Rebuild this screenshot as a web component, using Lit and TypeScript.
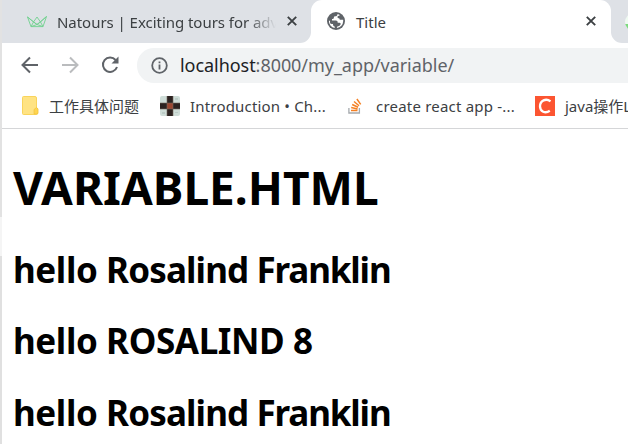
import { LitElement, html, css, svg } from "lit";
import { customElement } from "lit/decorators.js";

const closeIcon = html`<svg class="close" width="10" height="10" viewBox="0 0 10 10"><path d="M.8.8 9.2 9.2M9.2.8.8 9.2" stroke="#3c4043" stroke-width="1.900" fill="none"/></svg>`;

const crown = html`<svg class="crown" width="20" height="12" viewBox="0 0 20 12" fill="none" stroke-width=".9" stroke-linejoin="round">
  <path stroke="#72d190" d="M.5 1 4 10.600H16L19.500.5 13.500 6 10 1 6.500 6ZM.5 1 10 8.500 19.500.5M4 10.600 6.500 6 10 8.500 13.500 6 16 10.600M4 10.600 10 8.500 16 10.600"/></svg>`;

const globe = html`<svg class="globe" width="18" height="18" viewBox="0 0 18 18"><circle cx="9" cy="9" r="9" fill="#5f6368"/>
  <path fill="#fff" d="M10.500 1.900C10.600 3.600 9.600 4.200 8 4.300 7 4.400 6.900 5 6.900 5.800 6.900 6.800 6 7 5 7V8.600H8.800C10.200 8.600 10.700 9.400 10.700 10.700H12.500C13.600 10.700 13.800 11.600 13.500 12.500 13 13.800 11.500 14.400 10.300 14.500L9.800 16.100A7.200 7.200 0 0 0 16.200 9C16.200 8.600 16.200 8.200 16.100 7.800H13.600C12.600 7.800 12.300 7.200 12.300 6.300 11 6.300 10.400 5.700 10.500 4.700 10.600 3.900 11.500 3.700 12.500 3.700V2.800ZM1.900 8.800A7.200 7.200 0 0 0 7.700 16.100V14.500C6.600 14.400 6 13.700 6 12.600V11.900H4.600C3.500 11.900 3 11.200 3 10.300V8.800Z"/></svg>`;

const stack = html`<svg class="stack" width="14" height="16" viewBox="0 0 14 16" fill="none">
  <path stroke="#a5a9ad" stroke-width="1.300" d="M.9 10v5h10.500v-5"/>
  <path stroke="#f48024" stroke-width="1.500" d="M3 12.500h6.500M3.200 9.600l6.400 1.300M4.200 6.500l5.900 2.800M6 3.500l5 4.200M8.900 1l3.800 5.400"/></svg>`;

const mosaic = html`<svg class="mosaic" width="20" height="20" viewBox="0 0 20 20">
  <rect width="20" height="20" rx="2" fill="#cfddd8"/>
  ${svg`<path fill="#2c2220" d="M7 0h6v7H7zM0 7h7v6H0zM13 7h7v6h-7zM7 13h6v7H7z"/>
  <path fill="#9c4630" d="M7 7h6v6H7z"/>
  <path fill="#bccbc6" d="M2 16h3v2H2zM15 2h3v2h-3zM15 16h3v1h-3z"/>
  <path stroke="#756960" stroke-width=".6" d="M7 0v20M13 0v20M0 7h20M0 13h20"/>`}</svg>`;

@customElement("app-root")
class AppRoot extends LitElement {
  static styles = css`
    :host { display: flex; width: 628px; height: 444px; overflow: hidden; background: #fff;
      font-family: "Noto Sans", "Noto Sans CJK SC", sans-serif; color: #3c4043; white-space: nowrap; }
    * { box-sizing: border-box; }
    svg { display: block; flex: none; }
    .edge { flex: none; width: 2px; background: linear-gradient(#e2e2e2 217px, #f5f5f5 217px 256px, #e0e0e0 256px); }
    .window { width: 626px; flex: none; overflow: hidden; }
    .tab { height: 43px; display: flex; font-size: 15px; line-height: 43px; flex: none; }
    .tab.back { width: 309px; background: #dee1e6; border-bottom-right-radius: 11px; padding-left: 25px; }
    .tab.front { width: 300px; background: #fff; border-radius: 11px 11px 0 0; padding-left: 16px; }
    .strip { display: flex; width: 626px; height: 43px; background: linear-gradient(#dee1e6 20px, #fff 20px); }
    .tab.next { width: 17px; background: #dee1e6; border-bottom-left-radius: 11px; padding: 13px 0 0 14px; overflow: hidden; }
    .dot { width: 18px; height: 18px; border-radius: 9px; background: linear-gradient(#effaf1 11px, #7bdc7d 11px); flex: none; }
    .crown { margin-top: 16px; }
    .globe { margin-top: 12px; }
    .close { margin-top: 16px; }
    .label { height: 43px; padding-top: 1px; }
    .natours { margin-left: 10px; width: 220px; letter-spacing: -.04px;
      -webkit-mask-image: linear-gradient(90deg, #000 190px, transparent 219px); }
    .back .close { margin-left: 10px; }
    .title { margin-left: 11px; width: 219px; }
    .front .close { margin-left: 11px; }
    .toolbar { height: 45px; padding-top: 5px; display: flex; }
    .nav { margin-top: 7px; }
    .b { margin-left: 18px; } .f { margin-left: 20px; } .r { margin-left: 20px; }
    .pill { margin-left: 17px; width: 520px; height: 35px; flex: none; background: #f1f3f4;
      border-radius: 17px 0 0 17px; display: flex; padding-left: 14px; }
    .info { margin-top: 9px; }
    .url { margin-left: 12px; font-size: 18px; line-height: 35px; color: #5f6368; letter-spacing: -.05px; }
    .host { color: #202124; }
    .bookmarks { height: 41px; border-bottom: 1px solid #d5d6d8; display: flex; font-size: 15px; line-height: 36px; padding-left: 20px; }
    .bookmarks svg { margin-top: 8px; }
    .bookmarks .stack { margin-top: 10px; }
    .mark { display: flex; flex: none; }
    .m1 { width: 138px; } .m2 { width: 188px; letter-spacing: .18px; } .m3 { width: 187px; letter-spacing: .2px; }
    .m1 span { margin-left: 10px; } .m2 span { margin-left: 10px; } .m3 span { margin-left: 14px; } .m4 span { margin-left: 10px; }
    .page { padding: 22px 0 0 11px; color: #000; }
    h1, h2 { margin: 0; font-weight: 700; }
    h1 { font-size: 46px; line-height: 72px; height: 83px; }
    h2 { font-size: 35px; line-height: 72px; height: 72px; letter-spacing: -.4px; }
    h2.short { height: 71px; }
    .first { letter-spacing: -.87px; }
    .last { letter-spacing: -1.150px; }
  `;
  render() {
    return html`
      <div class="edge"></div>
      <div class="window">
        <div class="strip">
          <div class="tab back">${crown}<span class="label natours">Natours | Exciting tours for adv</span>${closeIcon}</div>
          <div class="tab front">${globe}<span class="label title">Title</span>${closeIcon}</div>
          <div class="tab next"><i class="dot"></i></div>
        </div>
        <div class="toolbar">
          <svg class="nav b" width="20" height="20" viewBox="0 0 20 20" fill="none" stroke="#5f6368" stroke-width="2"><path d="M18 10H3M10 2.500 2.500 10 10 17.500"/></svg>
          <svg class="nav f" width="20" height="20" viewBox="0 0 20 20" fill="none" stroke="#babcbe" stroke-width="2"><path d="M2 10h15M10 2.500 17.500 10 10 17.500"/></svg>
          <svg class="nav r" width="20" height="20" viewBox="0 0 20 20"><path d="M15.600 5A7.200 7.200 0 1 0 17 12" fill="none" stroke="#5f6368" stroke-width="2"/><path d="M18.500 1.500v7h-7Z" fill="#5f6368"/></svg>
          <div class="pill">
            <svg class="info" width="17" height="17" viewBox="0 0 17 17"><circle cx="8.500" cy="8.500" r="7.300" fill="none" stroke="#5f6368" stroke-width="1.800"/><path d="M7.600 7.600h1.800v5H7.600zM7.600 4.400h1.800v1.800H7.600z" fill="#5f6368"/></svg>
            <span class="url"><span class="host">localhost</span>:8000/my_app/variable/</span>
          </div>
        </div>
        <div class="bookmarks">
          <div class="mark m1"><svg width="17" height="19" viewBox="0 0 17 19"><path d="M1.500.5H13q1.500 0 1.500 1.500v9.500l1.200 1V17q0 1.500-1.500 1.500H1.500q-1 0-1-1v-16q0-1 1-1Z" fill="#ffe383" stroke="#f9d45c"/><path d="M12 18v-4.500l2.500-2 1.500 1.500v4q0 1-1 1Z" fill="#ffd550" stroke="#eebf35" stroke-width=".6"/></svg><span>工作具体问题</span></div>
          <div class="mark m2">${mosaic}<span>Introduction • Ch...</span></div>
          <div class="mark m3">${stack}<span>create react app -...</span></div>
          <div class="mark m4"><svg width="20" height="20" viewBox="0 0 20 20"><path fill="#fc5531" d="M0 0h20v20H0z"/><path d="M15.500 5.400C11 1.800 5 4.600 5 10.300c0 5.400 5.300 7.500 9.800 4.500" fill="none" stroke="#fff" stroke-width="2.300"/></svg><span>java操作L</span></div>
        </div>
        <div class="page">
          <h1>VARIABLE.HTML</h1>
          <h2 class="short">hello <span class="first">Rosalind </span><span class="last">Franklin</span></h2>
          <h2>hello ROSALIND 8</h2>
          <h2>hello <span class="first">Rosalind </span><span class="last">Franklin</span></h2>
        </div>
      </div>`;
  }
}
